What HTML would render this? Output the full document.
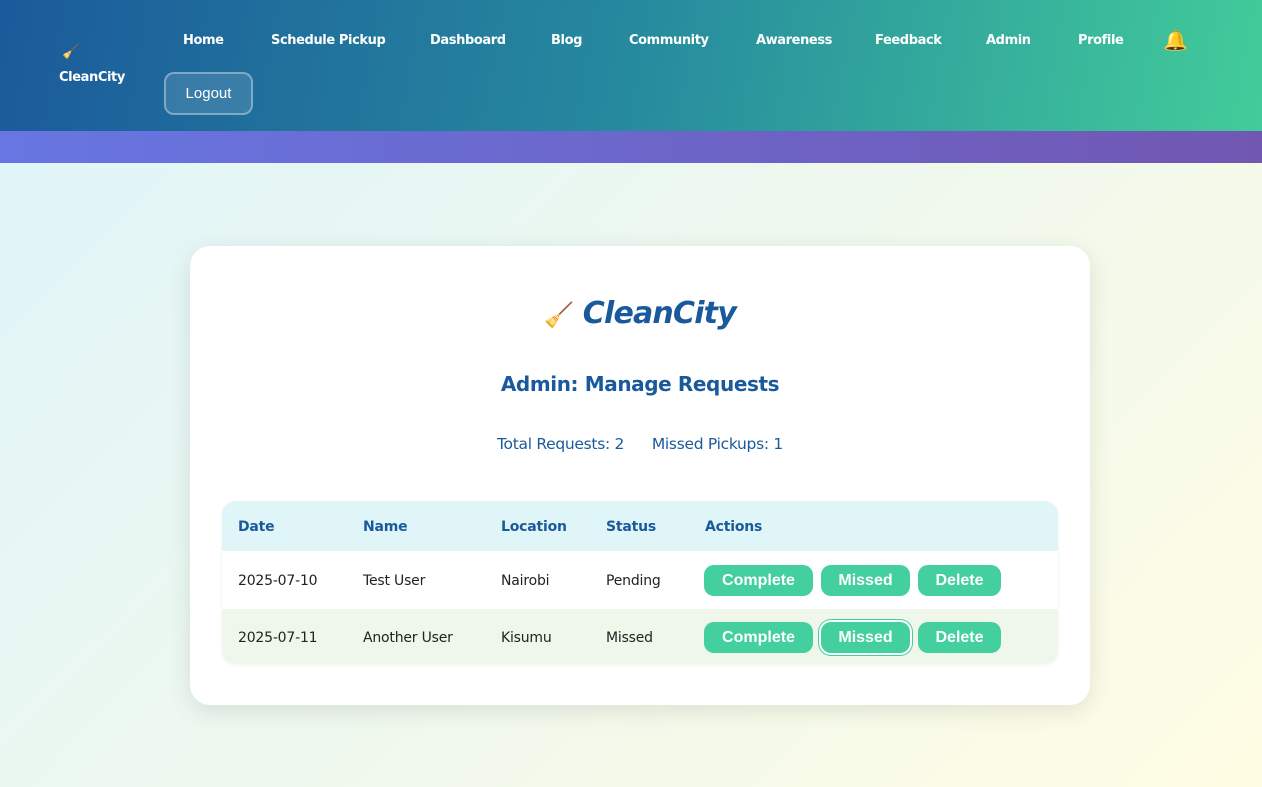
<!DOCTYPE html>
<html><head><meta charset="utf-8"><style>
*{margin:0;padding:0;box-sizing:border-box}
body{width:1262px;height:787px;overflow:hidden;font-family:"DejaVu Sans","Liberation Sans",sans-serif;background:linear-gradient(135deg,#def5fb 0%,#eef8ee 50%,#fffde4 100%);position:relative}
header{position:absolute;left:0;top:0;width:1262px;height:131px;background:linear-gradient(100deg,#1b5a9b 0%,#268a9e 50%,#42cc9a 100%);color:#fff}
.band{position:absolute;left:0;top:131px;width:1262px;height:32px;background:linear-gradient(90deg,#6776e2,#7157b2)}
.logo{position:absolute;left:59px;top:70px;font-weight:bold;font-size:13px;letter-spacing:-0.4px}
.broom{position:absolute;left:62px;top:44px;font-size:14px}
.nav a{position:absolute;top:33px;font-size:13px;font-weight:bold;color:#fff;text-decoration:none;letter-spacing:-0.4px}
.logout{position:absolute;left:164px;top:72px;width:89px;height:43px;border:2px solid rgba(255,255,255,.35);background:rgba(255,255,255,.12);border-radius:10px;color:#fff;font-size:15px;text-align:center;line-height:39px;font-family:"Liberation Sans",sans-serif}
.card{position:absolute;left:190px;top:246px;width:900px;height:459px;background:#fff;border-radius:20px;box-shadow:0 6px 24px rgba(0,0,0,.1)}
.title{position:absolute;left:0;width:900px;top:50px;text-align:center;font-size:30px;font-weight:bold;font-style:oblique;color:#1a5a9c;font-family:"DejaVu Sans",sans-serif;letter-spacing:-0.8px}
h2{position:absolute;left:0;width:900px;top:126px;text-align:center;font-size:20px;color:#1a5a9c;letter-spacing:-0.4px}
.stats{position:absolute;left:0;width:900px;top:189px;text-align:center;font-size:15.5px;color:#1a5a9c;letter-spacing:-0.3px}
.table{position:absolute;left:32px;top:255px;width:836px;height:163px;border-radius:14px;overflow:hidden;box-shadow:0 1px 4px rgba(0,0,0,.06)}
.row{position:absolute;left:0;width:836px;font-size:14px;color:#222;letter-spacing:-0.2px}
.row span{position:absolute}
.hd{top:0;height:50px;background:#dff5f7;color:#1a5a9c;font-weight:bold}
.r1{top:50px;height:58px;background:#fff}
.r2{top:108px;height:55px;background:#eff6ea}
.btn{position:absolute;height:31px;border-radius:10px;background:#43cf9e;color:#fff;font-family:"Liberation Sans",sans-serif;font-weight:bold;font-size:16px;text-align:center;line-height:31px;letter-spacing:0}
</style></head><body>
<header>
<span class="broom">🧹</span>
<div class="logo">CleanCity</div>
<div class="nav">
<a style="left:183px">Home</a><a style="left:271px">Schedule Pickup</a><a style="left:430px">Dashboard</a><a style="left:551px">Blog</a><a style="left:629px">Community</a><a style="left:756px">Awareness</a><a style="left:875px">Feedback</a><a style="left:986px">Admin</a><a style="left:1078px">Profile</a><a style="left:1163px;top:28px;font-size:20px;color:#f5b72a">🔔</a>
</div>
<div class="logout">Logout</div>
</header>
<div class="band"></div>
<div class="card">
<div class="title"><span style="font-size:24px;font-style:normal">🧹</span>&nbsp;CleanCity</div>
<h2>Admin: Manage Requests</h2>
<div class="stats">Total Requests: 2 &nbsp;&nbsp;&nbsp;&nbsp; Missed Pickups: 1</div>
<div class="table">
<div class="row hd"><span style="left:16px;top:18px">Date</span><span style="left:141px;top:18px">Name</span><span style="left:279px;top:18px">Location</span><span style="left:384px;top:18px">Status</span><span style="left:483px;top:18px">Actions</span></div>
<div class="row r1"><span style="left:16px;top:22px">2025-07-10</span><span style="left:141px;top:22px">Test User</span><span style="left:279px;top:22px">Nairobi</span><span style="left:384px;top:22px">Pending</span>
<div class="btn" style="left:482px;top:14px;width:109px">Complete</div><div class="btn" style="left:599px;top:14px;width:89px">Missed</div><div class="btn" style="left:696px;top:14px;width:83px">Delete</div></div>
<div class="row r2"><span style="left:16px;top:21px">2025-07-11</span><span style="left:141px;top:21px">Another User</span><span style="left:279px;top:21px">Kisumu</span><span style="left:384px;top:21px">Missed</span>
<div class="btn" style="left:482px;top:13px;width:109px">Complete</div><div class="btn" style="left:599px;top:13px;width:89px;box-shadow:0 0 0 2px #fff,0 0 0 3px #43cf9e">Missed</div><div class="btn" style="left:696px;top:13px;width:83px">Delete</div></div>
</div>
</div>
</body></html>
